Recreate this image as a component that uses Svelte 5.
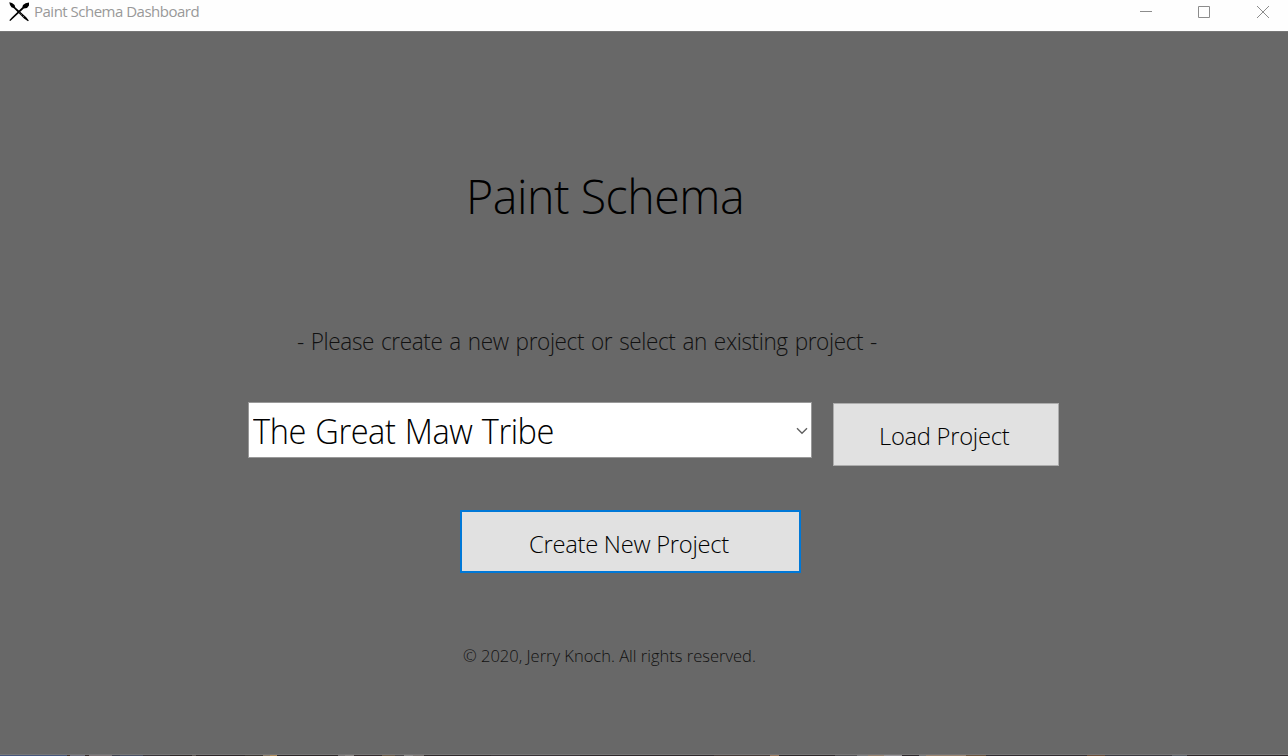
<script>
  let projects = $state(['The Great Maw Tribe']);
  let selected = $state(0);

  // Colours of the desktop sliver below the window: [width, colour]
  const sliver = [
    [60, '#46567c'], [3, '#3a2d2c'], [13, '#6f7080'], [4, '#33292b'], [20, '#7c7478'], [8, '#3f4250'],
    [20, '#4a5064'], [24, '#38343a'], [20, '#2f2829'], [4, '#5c5552'], [44, '#2d2628'], [16, '#3b3532'],
    [6, '#8a7a68'], [6, '#b08a58'], [55, '#2d2728'], [6, '#777273'], [8, '#8b8584'], [25, '#352c2e'],
    [12, '#6b5a48'], [8, '#4a4648'], [8, '#8b8888'], [10, '#77706e'], [60, '#302a2c'], [80, '#383236'],
    [120, '#2f282b'], [50, '#443937'], [8, '#98765a'], [50, '#2e282a'], [20, '#514f52'], [10, '#7d7c7e'],
    [14, '#96806e'], [16, '#989498'], [16, '#2f292c'], [6, '#777678'], [36, '#9a826e'], [18, '#6b523c'],
    [90, '#322c30'], [16, '#6a4c38'], [60, '#3c3a40'], [14, '#5c6068'], [90, '#2e282b']
  ];
  const total = sliver.reduce((sum, part) => sum + part[0], 0);
</script>

<div class="window">
  <header class="titlebar">
    <svg class="logo" width="22" height="20" viewBox="0 0 22 20">
      <path d="M.3 .3L3 1l2.600 2 .6 2.300L17 15l2.800 3.600-.8.6L15 16.500 4.800 6.200 2.500 5.300 1 3z" fill="#000" />
      <path d="M20 .5v3l-2 2.500-3.200.6L4 16.500 1.300 19l-1-.8L3 15.300 13.300 5.200 14 3l2.600-1.800z" fill="#000" />
      <path d="M10.500 10.800l5 4.700" stroke="#ccc" stroke-width="0.600" stroke-dasharray="1.200 1.200" />
    </svg>
    <span class="caption">Paint Schema Dashboard</span>
    <div class="controls">
      <svg width="14" height="14" viewBox="0 0 14 14"><path d="M1 6.500h12" /></svg>
      <svg width="14" height="14" viewBox="0 0 14 14"><path d="M1.500 1.500h11v11h-11z" /></svg>
      <svg width="14" height="14" viewBox="0 0 14 14"><path d="M1 1l12 12M13 1L1 13" /></svg>
    </div>
  </header>

  <main>
    <h1>Paint Schema</h1>
    <p class="message">- Please create a new project or select an existing project -</p>
    <div class="row">
      <div class="combo">
        <span>{projects[selected]}</span>
        <svg width="12" height="8" viewBox="0 0 12 8"><path d="M1 1.200l5 5 5-5" /></svg>
      </div>
      <button class="load"><span>Load Project</span></button>
    </div>
    <button class="create"><span>Create New Project</span></button>
    <p class="copyright">© 2020, Jerry Knoch. All rights reserved.</p>
  </main>

  <div class="sliver">
    {#each sliver as [width, colour]}
      <i style="width: {(width / total) * 100}%; background: {colour}"></i>
    {/each}
  </div>
</div>

<style>
  :global(body) {
    margin: 0;
    overflow: hidden;
  }
  .window {
    width: 1288px;
    height: 756px;
    display: flex;
    flex-direction: column;
    background: #686868;
    font-family: 'Open Sans', 'Noto Sans', sans-serif;
    font-weight: 300;
    color: #000;
    white-space: nowrap;
  }
  .titlebar {
    box-sizing: border-box;
    height: 32px;
    padding: 0 18px 8px 9px;
    display: flex;
    align-items: center;
    background: #fefefe;
    border-bottom: 1px solid #777;
  }
  .logo {
    flex: none;
    margin-right: 3px;
  }
  .caption {
    font-size: 15px;
    line-height: 22px;
    font-weight: 400;
    color: #999;
    letter-spacing: -0.5px;
    margin-top: -1px;
  }
  .controls {
    display: flex;
    gap: 44px;
    margin-left: auto;
  }
  .controls svg {
    fill: none;
    stroke: #8c8c8c;
    stroke-width: 1;
  }
  .controls svg:last-child {
    margin-left: 1px;
  }
  main {
    flex: 1;
    display: flex;
    flex-direction: column;
    align-items: flex-start;
    border-bottom: 1px solid #777;
  }
  h1 {
    margin: 128px 0 0 466px;
    font-size: 48.5px;
    line-height: 70px;
    font-weight: 300;
    letter-spacing: -0.5px;
    transform: scaleX(0.96);
    transform-origin: left;
  }
  .message {
    margin: 96px 0 0 297px;
    font-size: 23.5px;
    line-height: 30px;
    letter-spacing: -0.4px;
    word-spacing: 1.5px;
    color: #111;
    transform: scaleX(0.96);
    transform-origin: left;
  }
  .row {
    display: flex;
    align-items: flex-start;
    margin: 46px 0 0 248px;
  }
  .combo {
    box-sizing: border-box;
    width: 564px;
    height: 56px;
    padding: 1px 3px 0 4px;
    display: flex;
    align-items: center;
    justify-content: space-between;
    background: #fff;
    border: 1px solid #999;
    font-size: 35px;
    line-height: 54px;
    letter-spacing: -0.5px;
    word-spacing: 1.5px;
  }
  .combo span {
    padding-top: 1px;
    transform: scaleX(0.932);
    transform-origin: left;
  }
  .combo svg {
    fill: none;
    stroke: #606060;
    stroke-width: 1.4;
  }
  button {
    box-sizing: border-box;
    padding: 3px 0 0;
    display: flex;
    align-items: center;
    justify-content: center;
    background: #e1e1e1;
    border: 1px solid #adadad;
    color: #000;
    font: inherit;
    font-size: 24.5px;
    line-height: 34px;
    letter-spacing: -0.3px;
  }
  button span {
    transform: scaleX(0.97);
  }
  .load {
    width: 226px;
    height: 63px;
    margin: 1px 0 0 21px;
    padding-right: 4px;
  }
  .create {
    width: 341px;
    height: 63px;
    margin: 44px 0 0 460px;
    padding-top: 4px;
    padding-right: 3px;
    border: 2px solid #0078d7;
  }
  .copyright {
    margin: 72px 0 0 463px;
    font-size: 16.5px;
    line-height: 22px;
    color: #111;
  }
  .sliver {
    display: flex;
    height: 1px;
  }
</style>
